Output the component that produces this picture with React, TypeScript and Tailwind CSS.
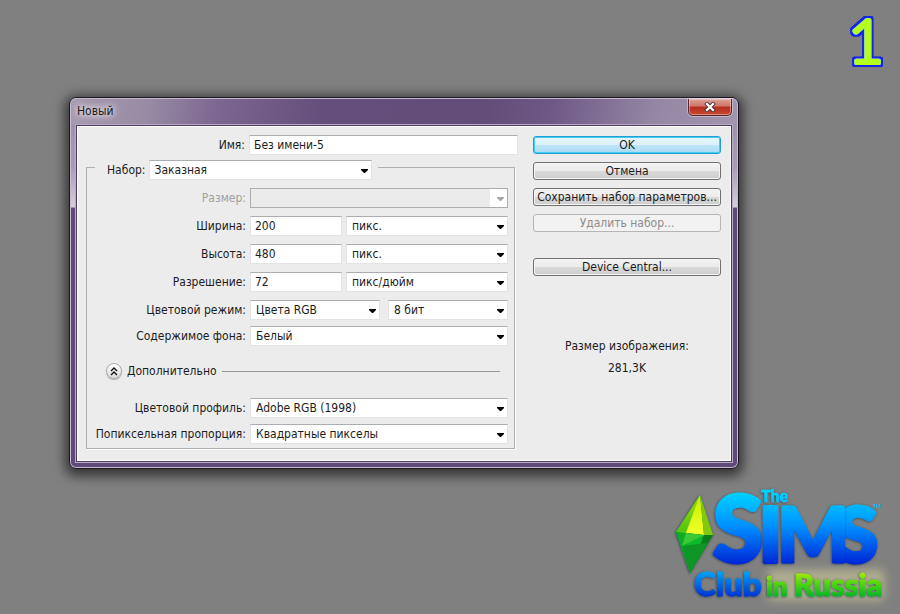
/**
 * New document dialog on a plain grey desktop
 */

import { useId } from 'react';
import type { ReactNode } from 'react';
import clsx from 'clsx';

interface SelectBoxProps {
    id: string;
    value: string;
    className?: string;
    disabled?: boolean;
    label?: string;
}

function SelectBox({ id, value, className, disabled, label }: SelectBoxProps) {
    return (
        <div className={clsx('relative h-5', className)}>
            <select
                id={id}
                aria-label={label}
                disabled={disabled}
                className={clsx(
                    'block h-5 w-full appearance-none border pl-[5px] pr-5 leading-4 outline-none',
                    disabled
                        ? 'border-[#adadad] bg-[#ebebeb]'
                        : 'border-[#e3e3e6] border-t-[#abadb3] bg-white'
                )}
            >
                <option>{value}</option>
            </select>
            <span
                className={clsx(
                    'pointer-events-none absolute inset-y-px right-px flex w-[17px] items-center justify-end pr-[3px] pt-px',
                    disabled ? 'bg-white text-[#a5a5a5]' : 'text-black'
                )}
            >
                <svg width="7" height="4" viewBox="0 0 7 4" fill="currentColor">
                    <path d="M0 0h7v1L4 4H3L0 1z" />
                </svg>
            </span>
        </div>
    );
}

interface TextBoxProps {
    id: string;
    value: string;
    className?: string;
}

function TextBox({ id, value, className }: TextBoxProps) {
    return (
        <input
            id={id}
            defaultValue={value}
            className={clsx(
                'h-5 min-w-0 border border-[#e3e3e6] border-t-[#abadb3] bg-white px-1 pb-px leading-4 outline-none',
                className
            )}
        />
    );
}

interface RowProps {
    id: string;
    label: string;
    muted?: boolean;
    children: ReactNode;
}

function Row({ id, label, muted, children }: RowProps) {
    return (
        <div className="flex items-center gap-1">
            <label
                htmlFor={id}
                className={clsx('w-[159px] shrink-0 text-right', muted && 'text-[#a0a0a0]')}
            >
                {label}
            </label>
            <div className="flex min-w-0 flex-1">{children}</div>
        </div>
    );
}

interface DialogButtonProps {
    children: ReactNode;
    variant?: 'primary' | 'normal';
    disabled?: boolean;
}

function DialogButton({ children, variant = 'normal', disabled }: DialogButtonProps) {
    return (
        <button
            type="button"
            disabled={disabled}
            className={clsx(
                'flex h-[18px] w-full items-center justify-center whitespace-nowrap rounded-[3px] border leading-4',
                disabled && 'border-[#b5b5b5] bg-[#f2f2f2] text-[#8c8c8c]',
                !disabled &&
                    variant === 'normal' &&
                    'border-[#707070] bg-[linear-gradient(#f3f3f3,#ebebeb_50%,#dadada_50%,#cdcdcd)] shadow-[inset_0_0_0_1px_#f5f5f5]',
                variant === 'primary' &&
                    'border-[#1f9fd2] bg-[linear-gradient(#e6f5fc,#dcf1fb_50%,#bfe5f7_50%,#a9dbf3)] shadow-[inset_0_0_0_1px_#45cdf5]'
            )}
        >
            {children}
        </button>
    );
}

function Logo() {
    return (
        <svg
            width="240"
            height="134"
            viewBox="0 0 240 134"
            className="overflow-visible font-['Lato',sans-serif] font-black"
            role="img"
            aria-label="The Sims Club in Russia"
        >
            <defs>
                <linearGradient id="sims" gradientUnits="userSpaceOnUse" x1="0" y1="12" x2="0" y2="84">
                    <stop offset="0" stopColor="#00d2ff" />
                    <stop offset="0.45" stopColor="#0092ff" />
                    <stop offset="1" stopColor="#0024d6" />
                </linearGradient>
                <linearGradient id="club" gradientUnits="userSpaceOnUse" x1="0" y1="86" x2="0" y2="116">
                    <stop offset="0" stopColor="#00b8ff" />
                    <stop offset="1" stopColor="#0030d0" />
                </linearGradient>
                <linearGradient id="russia" gradientUnits="userSpaceOnUse" x1="0" y1="88" x2="0" y2="116">
                    <stop offset="0" stopColor="#c8f000" />
                    <stop offset="0.5" stopColor="#55d80c" />
                    <stop offset="1" stopColor="#00b428" />
                </linearGradient>
                <linearGradient id="gemTop" x1="0" y1="0" x2="0" y2="1">
                    <stop offset="0" stopColor="#c5f000" />
                    <stop offset="1" stopColor="#f2ff2a" />
                </linearGradient>
                <linearGradient id="gemLeft" x1="0" y1="0" x2="0" y2="1">
                    <stop offset="0" stopColor="#a6dc00" />
                    <stop offset="1" stopColor="#4cc414" />
                </linearGradient>
                <filter id="glow" x="-20%" y="-50%" width="140%" height="200%">
                    <feGaussianBlur stdDeviation="4" />
                </filter>
                <filter id="edge" x="-10%" y="-10%" width="120%" height="120%">
                    <feDropShadow dx="-0.5" dy="0.5" stdDeviation="0.8" floodColor="#17303c" floodOpacity="0.8" />
                </filter>
            </defs>

            {/* Plumbob */}
            <g filter="url(#edge)">
                <path d="M40 14 53 54 30 92 16 51z" fill="#169b24" />
                <path d="M40 14 27 53 16 51z" fill="url(#gemLeft)" />
                <path d="M40 14 44 54 26 52z" fill="url(#gemTop)" />
                <path d="M40 14 53 54 44 54z" fill="#84c90a" />
                <path d="M16 51 26 52 30 92z" fill="#0aab27" />
                <path d="M26 52 44 54 30 92z" fill="#0db82c" />
                <path d="M44 54 53 54 30 92z" fill="#087e1c" />
                <path d="M26 52 44 54 22 65z" fill="#3cc934" />
                <path d="M22 65 48 62 30 92z" fill="#0b9526" />
            </g>

            <rect x="107" y="88" width="118" height="32" rx="6" fill="#dad69c" opacity="0.5" filter="url(#glow)" />

            <g strokeLinejoin="round">
                <g fill="url(#sims)" stroke="url(#sims)">
                    <text x="53" y="81" fontSize="91" strokeWidth="4" filter="url(#edge)">S</text>
                    <text x="176" y="81" fontSize="76" strokeWidth="4" filter="url(#edge)">S</text>
                    <text x="117" y="81" fontSize="76" strokeWidth="3" filter="url(#edge)">M</text>
                    <text x="99" y="81" fontSize="76" strokeWidth="4" filter="url(#edge)">I</text>
                    <text x="101" y="21" fontSize="16" strokeWidth="0.6" filter="url(#edge)">The</text>
                    <text x="213" y="27" fontSize="5" strokeWidth="0">TM</text>
                </g>
                <text x="34" y="115" fontSize="33" fill="url(#club)" stroke="url(#club)" strokeWidth="1.2" filter="url(#edge)">Club</text>
                <g fill="url(#russia)" stroke="url(#russia)" strokeWidth="1" filter="url(#edge)">
                    <text x="106" y="115" fontSize="26">in</text>
                    <text x="134" y="115" fontSize="31">Russia</text>
                </g>
            </g>
        </svg>
    );
}

function NewDocumentDialog() {
    const uid = useId();

    return (
        <section
            role="dialog"
            aria-label="Новый"
            className="rounded-[7px] border border-[#1c1822] bg-[linear-gradient(#9b8ca9,#a99db5_70px,#d6d0dc_109px,#604a7a_110px,#604a7a)] p-[6px] pt-0 shadow-[0_3px_12px_4px_rgba(0,0,0,0.6),inset_0_0_0_1px_#c5bad0]"
        >
            {/* Title bar */}
            <header className="-mx-[5px] flex h-[27px] justify-between rounded-t-md border-t border-[#c5bad0] bg-[linear-gradient(100deg,#a79baf,#978aa4_12%,#7c6790_22%,#644e7b_38%,#624c78_62%,#6e5986_72%,#9688a5_88%,#a194ae)] pl-[6px]">
                <h1 className="pt-1 leading-4 [text-shadow:0_0_6px_#fff,0_0_8px_#fff]">Новый</h1>
                <button
                    type="button"
                    aria-label="Закрыть"
                    className="mr-[5px] flex h-[17px] w-11 items-center justify-center rounded-b-[5px] border border-t-0 border-[#5b2430] bg-[linear-gradient(#dda399,#cf7365_45%,#b42d1d_50%,#c64a31)] shadow-[inset_0_0_0_1px_rgba(255,220,210,0.45),0_0_0_1px_rgba(255,255,255,0.35)]"
                >
                    <svg width="12" height="10" viewBox="0 0 12 10" fill="none">
                        <path d="M3 2l6 6M9 2l-6 6" stroke="#4d3640" strokeWidth="4" strokeLinecap="square" />
                        <path d="M3 2l6 6M9 2l-6 6" stroke="#fff" strokeWidth="2.2" strokeLinecap="square" />
                    </svg>
                </button>
            </header>

            <form className="flex gap-[15px] border border-[#4c3d60] bg-[#ececec] pb-3 pl-[9px] pr-[10px] pt-[9px] shadow-[inset_0_0_0_1px_#fff,0_0_0_1px_#b9adc6]">
                <div className="min-w-0 flex-1">
                    <Row id={`${uid}-name`} label="Имя:">
                        <TextBox id={`${uid}-name`} value="Без имени-5" className="w-full" />
                    </Row>

                    <fieldset className="mr-[3px] min-w-0 border border-[#b0b0b0] pb-1 pr-[6px] shadow-[1px_1px_0_#fff]">
                        <legend className="ml-2 flex items-center gap-[3px] pl-3 pr-[6px] pt-[5px]">
                            <label htmlFor={`${uid}-preset`}>Набор:</label>
                            <SelectBox id={`${uid}-preset`} value="Заказная" className="w-[223px]" />
                        </legend>

                        <div className="flex flex-col gap-2 pt-2">
                            <Row id={`${uid}-size`} label="Размер:" muted>
                                <SelectBox id={`${uid}-size`} value="" className="w-full" disabled />
                            </Row>
                            <Row id={`${uid}-width`} label="Ширина:">
                                <TextBox id={`${uid}-width`} value="200" className="mr-1 w-[92px]" />
                                <SelectBox id={`${uid}-width-unit`} label="Единицы ширины" value="пикс." className="flex-1" />
                            </Row>
                            <Row id={`${uid}-height`} label="Высота:">
                                <TextBox id={`${uid}-height`} value="480" className="mr-1 w-[92px]" />
                                <SelectBox id={`${uid}-height-unit`} label="Единицы высоты" value="пикс." className="flex-1" />
                            </Row>
                            <Row id={`${uid}-resolution`} label="Разрешение:">
                                <TextBox id={`${uid}-resolution`} value="72" className="mr-1 w-[92px]" />
                                <SelectBox id={`${uid}-resolution-unit`} label="Единицы разрешения" value="пикс/дюйм" className="flex-1" />
                            </Row>
                            <Row id={`${uid}-mode`} label="Цветовой режим:">
                                <SelectBox id={`${uid}-mode`} value="Цвета RGB" className="mr-2 w-[130px]" />
                                <SelectBox id={`${uid}-depth`} label="Глубина цвета" value="8 бит" className="flex-1" />
                            </Row>
                        </div>

                        <div className="pt-[6px]">
                            <Row id={`${uid}-background`} label="Содержимое фона:">
                                <SelectBox id={`${uid}-background`} value="Белый" className="w-full" />
                            </Row>
                        </div>

                        {/* Advanced */}
                        <div className="mb-[17px] mt-[15px] flex h-5 items-center gap-[5px] pl-[19px] pr-2">
                            <button type="button" className="flex items-center gap-[5px]">
                                <span className="flex size-4 items-center justify-center rounded-full border border-[#aaa] bg-linear-to-b from-white to-[#dcdcdc] shadow-[0_1px_1px_#aaa]">
                                    <svg width="8" height="9" viewBox="0 0 8 9" fill="none" stroke="#111" strokeWidth="1.4">
                                        <path d="M1 4l3-3 3 3M1 8l3-3 3 3" />
                                    </svg>
                                </span>
                                Дополнительно
                            </button>
                            <span className="h-px flex-1 bg-[#979797]" />
                        </div>

                        <div className="flex flex-col gap-[6px]">
                            <Row id={`${uid}-profile`} label="Цветовой профиль:">
                                <SelectBox id={`${uid}-profile`} value="Adobe RGB (1998)" className="w-full" />
                            </Row>
                            <Row id={`${uid}-ratio`} label="Попиксельная пропорция:">
                                <SelectBox id={`${uid}-ratio`} value="Квадратные пикселы" className="w-full" />
                            </Row>
                        </div>
                    </fieldset>
                </div>

                <div className="flex w-[188px] shrink-0 flex-col pt-px">
                    <div className="flex flex-col gap-2">
                        <DialogButton variant="primary">OK</DialogButton>
                        <DialogButton>Отмена</DialogButton>
                        <DialogButton>Сохранить набор параметров...</DialogButton>
                        <DialogButton disabled>Удалить набор...</DialogButton>
                    </div>
                    <div className="mt-[26px]">
                        <DialogButton>Device Central...</DialogButton>
                    </div>
                    <dl className="mt-[62px] text-center leading-4">
                        <dt>Размер изображения:</dt>
                        <dd className="mt-[6px]">281,3K</dd>
                    </dl>
                </div>
            </form>
        </section>
    );
}

export default function App() {
    return (
        <main className="flex min-h-screen flex-col bg-[#808080] font-['DejaVu_Sans_Condensed','DejaVu_Sans',sans-serif] text-[12px] leading-4 text-[#1c1c1c]">
            <div className="flex h-[97px] justify-end pr-3">
                <svg
                    width="40"
                    height="80"
                    viewBox="0 0 40 80"
                    className="overflow-visible font-['Lato',sans-serif] font-light"
                    strokeLinejoin="round"
                >
                    <defs>
                        <filter id="outline" x="-30%" y="-20%" width="160%" height="140%">
                            <feMorphology in="SourceAlpha" operator="dilate" radius="2" result="fat" />
                            <feGaussianBlur in="fat" stdDeviation="0.6" result="soft" />
                            <feFlood floodColor="#1226e6" />
                            <feComposite in2="soft" operator="in" result="edge" />
                            <feMerge>
                                <feMergeNode in="edge" />
                                <feMergeNode in="edge" />
                                <feMergeNode in="SourceGraphic" />
                            </feMerge>
                        </filter>
                    </defs>
                    <text
                        x="0"
                        y="63"
                        fontSize="62"
                        fill="#b4ff1e"
                        stroke="#b4ff1e"
                        strokeWidth="4"
                        filter="url(#outline)"
                    >
                        1
                    </text>
                </svg>
            </div>

            <div className="pl-[69px] pr-[161px]">
                <NewDocumentDialog />
            </div>

            <footer className="flex justify-end pt-3">
                <Logo />
            </footer>
        </main>
    );
}
